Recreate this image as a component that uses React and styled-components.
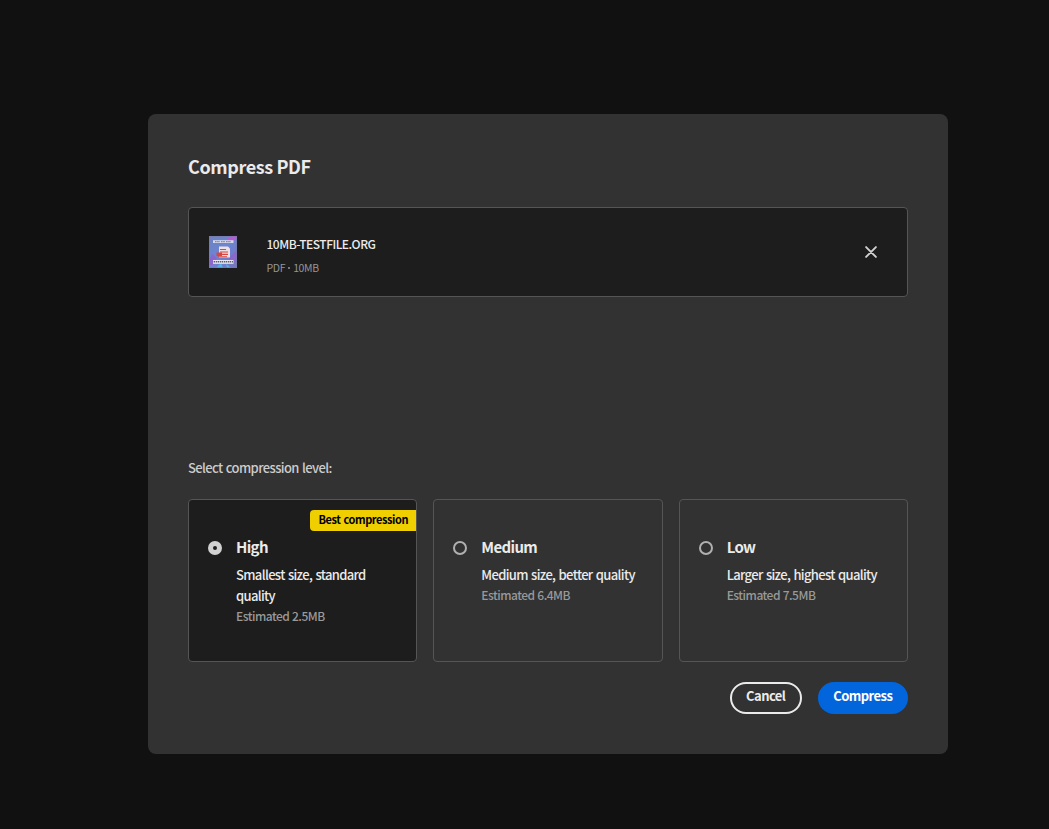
import React, { useState } from "react";
import styled, { createGlobalStyle } from "styled-components";

const GlobalStyle = createGlobalStyle`
  * { box-sizing: border-box; }
  body {
    margin: 0;
    background: #111111;
    font-family: "Noto Sans CJK SC", "Noto Sans", sans-serif;
    overflow: hidden;
  }
  h1, h2, p { margin: 0; }
`;

const Page = styled.main`
  min-height: 829px;
  padding: 114px 101px 75px 148px;
`;

const Dialog = styled.section`
  width: 800px;
  height: 640px;
  padding: 40px;
  border-radius: 8px;
  background: #323232;
  display: flex;
  flex-direction: column;
`;

const Title = styled.h1`
  font-size: 18px;
  line-height: 24px;
  font-weight: 700;
  color: #ebebeb;
  letter-spacing: -0.4px;
`;

const FileCard = styled.div`
  margin-top: 29px;
  height: 90px;
  flex: none;
  padding: 0 26px 0 20px;
  border: 1px solid #555555;
  border-radius: 4px;
  background: #1d1d1d;
  display: flex;
  align-items: center;
`;

const FileInfo = styled.div`
  margin-left: 29.5px;
  padding-top: 8px;
  flex: 1;
`;

const FileName = styled.p`
  font-size: 12px;
  line-height: 24px;
  font-weight: 500;
  color: #ebebeb;
  letter-spacing: -0.5px;
`;

const FileMeta = styled.p`
  font-size: 10.5px;
  line-height: 24px;
  color: #959595;
  letter-spacing: -0.35px;
`;

const Dot = styled.span`
  display: inline-block;
  width: 2px;
  height: 2px;
  margin: 0 3px 3px;
  border-radius: 50%;
  background: currentColor;
`;

const IconButton = styled.button`
  width: 20px;
  height: 20px;
  padding: 0;
  border: 0;
  background: none;
  display: grid;
  place-items: center;
`;

const Prompt = styled.p`
  margin-top: 161px;
  font-size: 13px;
  line-height: 20px;
  font-weight: 500;
  color: #cccccc;
  letter-spacing: -0.6px;
  word-spacing: 0.8px;
`;

const Options = styled.div`
  margin-top: 21px;
  height: 163px;
  flex: none;
  display: grid;
  grid-template-columns: repeat(3, 1fr);
  gap: 16px;
`;

const Option = styled.div`
  position: relative;
  border: 1px solid #555555;
  border-radius: 4px;
  background: ${(p) => (p.$selected ? "#1d1d1d" : "transparent")};
  padding: 35px 20px 0 19px;
  display: flex;
  align-items: flex-start;
`;

const Radio = styled.span`
  flex: none;
  width: 14px;
  height: 14px;
  margin: 6px 14px 0 0;
  border-radius: 50%;
  border: ${(p) => (p.$selected ? "5px solid #d1d1d1" : "2px solid #b0b0b0")};
`;

const OptionName = styled.h2`
  font-size: 15px;
  line-height: 24px;
  font-weight: 700;
  color: #ebebeb;
  letter-spacing: -0.65px;
`;

const OptionText = styled.p`
  margin-top: 5px;
  font-size: 13px;
  line-height: 21px;
  font-weight: 500;
  color: #ebebeb;
  letter-spacing: -0.65px;
  word-spacing: 1px;
`;

const Estimate = styled.p`
  font-size: 12px;
  line-height: 20px;
  font-weight: 500;
  color: #999999;
  letter-spacing: -0.5px;
  word-spacing: 0.5px;
`;

const Badge = styled.span`
  position: absolute;
  top: 10px;
  right: 0;
  width: 106px;
  height: 21px;
  border-radius: 4px 0 0 4px;
  background: #efcf00;
  color: #000000;
  font-size: 11px;
  line-height: 19px;
  font-weight: 700;
  letter-spacing: -0.42px;
  word-spacing: 0.8px;
  text-align: center;
  white-space: nowrap;
`;

const Actions = styled.div`
  margin-top: 20px;
  display: flex;
  justify-content: flex-end;
  gap: 16px;
`;

const Button = styled.button`
  width: ${(p) => (p.$primary ? "90px" : "72px")};
  height: 32px;
  padding: 0 0.5px 4px 0;
  border-radius: 16px;
  border: 2px solid ${(p) => (p.$primary ? "#0265dc" : "#ebebeb")};
  background: ${(p) => (p.$primary ? "#0265dc" : "transparent")};
  color: ${(p) => (p.$primary ? "#ffffff" : "#ebebeb")};
  font-family: inherit;
  font-size: 13px;
  line-height: 20px;
  font-weight: 700;
  letter-spacing: -0.55px;
`;

const Thumbnail = () => (
  <svg width="28" height="32" viewBox="0 0 28 32" aria-label="File preview">
    <defs>
      <linearGradient id="cover" x1="0" y1="0" x2="1" y2="1">
        <stop offset="0" stopColor="#7181bd" />
        <stop offset=".45" stopColor="#6a86d4" />
        <stop offset="1" stopColor="#7a73bd" />
      </linearGradient>
    </defs>
    <rect width="28" height="32" fill="url(#cover)" />
    <path d="M17 4L22 0H28V2L22 7Z" fill="#b85bd6" />
    <path d="M3 18L8 22L4 29H0V25ZM20 22L28 14V23L23 28Z" fill="#8b66cc" />
    <path d="M7 32L12 27L14 32M17 28L22 32H18Z" fill="#55b5e8" />
    <rect x="4" y="4.2" width="20.5" height="2.8" fill="#d5d8ea" />
    <path d="M6 5.6H11M12 5.6H16M17 5.6H22" stroke="#85889e" strokeWidth="1.2" strokeDasharray="1.6 .6" />
    <path d="M10 10.5H19L21 12.5V21.5H10Z" fill="#f0dfe3" />
    <rect x="7.5" y="16.5" width="5.5" height="3.5" fill="#d9453f" />
    <path d="M11 13.5H17M11 16H19M13 18.4H19M9 20.8H18" stroke="#d9453f" strokeWidth="1.1" />
    <rect x="4" y="24" width="20.5" height="3.8" fill="#e8e8f2" />
    <path d="M4.6 25.8H24" stroke="#5d5d70" strokeWidth="1.5" strokeDasharray="1.7 .7 1 .6" />
    <rect x=".5" y=".5" width="27" height="31" fill="none" stroke="#777c9e" strokeOpacity=".6" />
  </svg>
);

const CloseIcon = () => (
  <svg width="12" height="12" viewBox="0 0 12 12">
    <path d="M1.1 1.1L10.9 10.9M10.9 1.1L1.1 10.9" stroke="#d1d1d1" strokeWidth="1.9" strokeLinecap="round" />
  </svg>
);

const levels = [
  { name: "High", text: "Smallest size, standard quality", size: "2.5MB", badge: "Best compression" },
  { name: "Medium", text: "Medium size, better quality", size: "6.4MB" },
  { name: "Low", text: "Larger size, highest quality", size: "7.5MB" },
];

export default function App() {
  const [level, setLevel] = useState("High");
  return (
    <Page>
      <GlobalStyle />
      <Dialog role="dialog">
        <Title>Compress PDF</Title>
        <FileCard>
          <Thumbnail />
          <FileInfo>
            <FileName>10MB-TESTFILE.ORG</FileName>
            <FileMeta>
              PDF
              <Dot />
              10MB
            </FileMeta>
          </FileInfo>
          <IconButton aria-label="Remove file">
            <CloseIcon />
          </IconButton>
        </FileCard>
        <Prompt>Select compression level:</Prompt>
        <Options>
          {levels.map((l) => (
            <Option key={l.name} $selected={level === l.name} onClick={() => setLevel(l.name)}>
              {l.badge && <Badge>{l.badge}</Badge>}
              <Radio $selected={level === l.name} />
              <div>
                <OptionName>{l.name}</OptionName>
                <OptionText>{l.text}</OptionText>
                <Estimate>Estimated {l.size}</Estimate>
              </div>
            </Option>
          ))}
        </Options>
        <Actions>
          <Button>Cancel</Button>
          <Button $primary>Compress</Button>
        </Actions>
      </Dialog>
    </Page>
  );
}
